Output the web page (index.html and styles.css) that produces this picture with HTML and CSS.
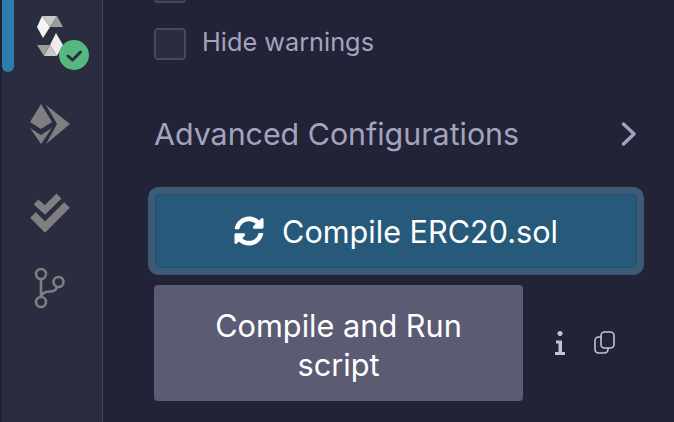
FILE: index.html
```html
<!DOCTYPE html>
<html lang="en">
<head>
<meta charset="UTF-8">
<meta name="viewport" content="width=device-width, initial-scale=1.0">
<title>Solidity Compiler</title>
<link rel="stylesheet" href="styles.css">
</head>
<body>
<div class="app">
  <div class="sidebar">
    <div class="active-bar"></div>
    <svg class="icon-rail" width="103" height="320" viewBox="0 0 103 320">
      <!-- solidity -->
      <polygon points="42,16 50,27 43,38 37,27" fill="#f4f4f4"/>
      <polygon points="42,16 57,16 50,27" fill="#c9c9c9"/>
      <polygon points="57,16 63,27 50,27" fill="#9c9c9c"/>
      <polygon points="56,33 63,45 57,56 50,45" fill="#ededed"/>
      <polygon points="50,45 57,56 44,56" fill="#c9c9c9"/>
      <polygon points="37,45 50,45 44,56" fill="#9c9c9c"/>
      <circle cx="74" cy="55" r="15" fill="#55b87f"/>
      <polyline points="68,56 72.5,60 80.5,52" fill="none" stroke="#2a2c3f" stroke-width="3" stroke-linecap="round" stroke-linejoin="round"/>
      <!-- deploy -->
      <polygon points="41,104 52,122 41,129 30,122" fill="#7f7f81"/>
      <polygon points="30,128 41,135 52,128 41,144" fill="#7f7f81"/>
      <polygon points="46,105 70,124 46,144 57,124" fill="#7f7f81"/>
      <!-- tests -->
      <polyline points="36,202 45,210 59,196" fill="none" stroke="#7f7f81" stroke-width="7" stroke-linejoin="miter"/>
      <polyline points="33,215 45,227 67,205" fill="none" stroke="#7f7f81" stroke-width="8" stroke-linejoin="miter"/>
      <!-- git -->
      <g fill="none" stroke="#7f7f81" stroke-width="2.6">
        <circle cx="41" cy="274" r="5"/>
        <circle cx="58.500" cy="282" r="5"/>
        <circle cx="41" cy="302" r="5"/>
        <path d="M41 279V297M57 287C56 291 53 291.500 50 291.500C46 291.500 42 293 41 297"/>
      </g>
    </svg>
  </div>
  <div class="panel">
    <div class="check-row">
      <span class="checkbox"></span>
    </div>
    <div class="check-row">
      <span class="checkbox"></span>
      <span class="check-label">Hide warnings</span>
    </div>
    <div class="advanced">
      <span>Advanced Configurations</span>
      <svg width="16" height="24" viewBox="0 0 16 24"><polyline points="2.500,2 13,12 2.500,22" fill="none" stroke="#a2a3bd" stroke-width="3.400" stroke-linecap="round" stroke-linejoin="round"/></svg>
    </div>
    <button class="btn-compile">
      <svg class="sync" width="30" height="30" viewBox="0 0 512 512"><path fill="#fff" d="M370.72 133.28C339.458 104.008 298.888 87.962 255.848 88c-77.458.068-144.328 53.178-162.791 126.85-1.344 5.363-6.122 9.15-11.651 9.15H24.103c-7.498 0-13.194-6.807-11.807-14.176C33.933 94.924 134.813 8 256 8c66.448 0 126.791 26.136 171.315 68.685L463.03 40.97C478.149 25.851 504 36.559 504 57.941V192c0 13.255-10.745 24-24 24H345.941c-21.382 0-32.09-25.851-16.971-40.971l41.75-41.749zM32 296h134.059c21.382 0 32.09 25.851 16.971 40.971l-41.75 41.75c31.262 29.273 71.835 45.319 114.876 45.28 77.418-.07 144.315-53.144 162.787-126.849 1.344-5.363 6.122-9.15 11.651-9.15h57.304c7.498 0 13.194 6.807 11.807 14.176C478.067 417.076 377.187 504 256 504c-66.448 0-126.791-26.136-171.315-68.685L48.97 471.03C33.851 486.149 8 475.441 8 454.059V320c0-13.255 10.745-24 24-24z"/></svg>
      <span>Compile ERC20.sol</span>
    </button>
    <div class="script-row">
      <button class="btn-script">Compile and Run script</button>
      <svg class="icon-info" width="10" height="24" viewBox="0 0 10 24">
        <circle cx="5" cy="2.500" r="2.500" fill="#c2c3d4"/>
        <path fill="#c2c3d4" d="M1 9.500H7V21H10V24H0V21H3.500V12.500H1Z"/>
      </svg>
      <svg class="icon-copy" width="21" height="23" viewBox="0 0 21 23">
        <g fill="none" stroke="#c2c3d4" stroke-width="1.600">
          <rect x="7" y="1" width="13" height="16" rx="3.500"/>
          <path d="M7 6H4.500A3.500 3.500 0 0 0 1 9.500V18.500A3.500 3.500 0 0 0 4.500 22H10.500A3.500 3.500 0 0 0 14 18.500V17"/>
        </g>
      </svg>
    </div>
  </div>
</div>
</body>
</html>
```

FILE: styles.css
```css
html, body {
  margin: 0;
  padding: 0;
  height: 422px;
  overflow: hidden;
  background-color: #222336;
  font-family: Inter, "Liberation Sans", sans-serif;
}
.app {
  display: flex;
  height: 422px;
  overflow: hidden;
}
.sidebar {
  position: relative;
  width: 100px;
  flex-shrink: 0;
  margin-right: 51px;
  background-color: #2a2c3f;
  border-left: 2px solid #1f2233;
  border-right: 1px solid #44465c;
}
.active-bar {
  position: absolute;
  left: 0;
  top: -10px;
  width: 12px;
  height: 82px;
  border-radius: 6px;
  background-color: #2e7cab;
}
.icon-rail {
  position: absolute;
  left: -2px;
  top: 0;
}
.panel {
  flex: 1;
  display: flex;
  flex-direction: column;
  align-items: flex-start;
  margin-top: -29px;
}
.check-row {
  display: flex;
  align-items: center;
  height: 32px;
  margin-bottom: 25px;
}
.checkbox {
  display: block;
  width: 28px;
  height: 28px;
  background-color: #2a2c3f;
  border: 2px solid #46485e;
  border-radius: 4px;
}
.check-label {
  margin-left: 16px;
  padding-bottom: 5px;
  font-size: 25.3px;
  color: #a2a3bd;
}
.advanced {
  display: flex;
  align-items: center;
  justify-content: space-between;
  width: 483px;
  height: 40px;
  margin-top: 29px;
  font-size: 30.4px;
  color: #a2a3bd;
}
.advanced span {
  letter-spacing: -0.02px;
}
.btn-compile {
  display: flex;
  align-items: center;
  justify-content: center;
  gap: 18px;
  box-sizing: border-box;
  width: 482px;
  height: 74px;
  margin: 40px 0 0 1px;
  background-color: #275a7a;
  border: 1px solid #234f6d;
  border-radius: 4px;
  box-shadow: 0 0 0 7px #3d5a76;
  color: #fff;
  font-family: inherit;
  font-size: 30.6px;
}
.script-row {
  display: flex;
  align-items: center;
  margin-top: 17px;
}
.btn-script {
  width: 369px;
  height: 116px;
  padding: 4px 30px 0;
  background-color: #5b5b73;
  border: none;
  border-radius: 4px;
  color: #fff;
  font-family: inherit;
  font-size: 30.7px;
  line-height: 39px;
}
.icon-info {
  margin-left: 32px;
}
.icon-copy {
  margin-left: 29px;
  margin-bottom: 2px;
}
```
